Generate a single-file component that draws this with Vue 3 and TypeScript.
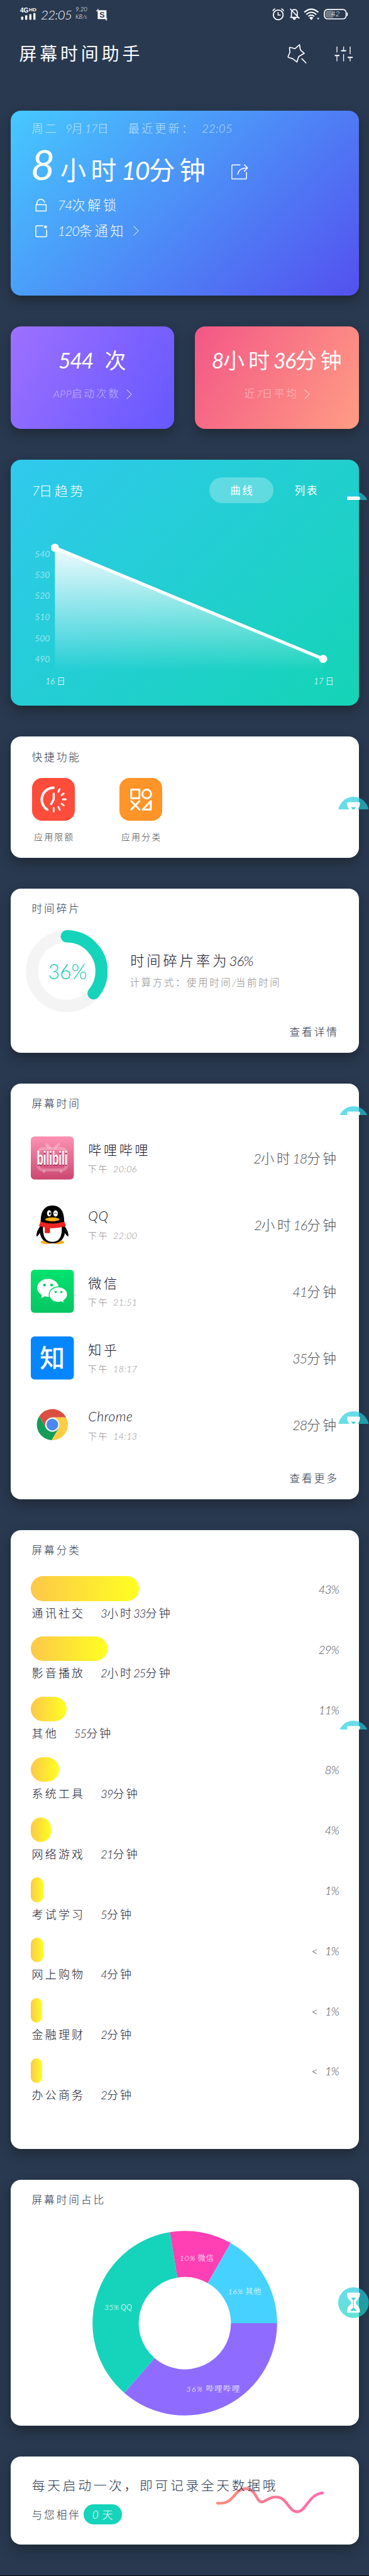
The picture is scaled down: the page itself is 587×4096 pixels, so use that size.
<script setup lang="ts">
import { h } from 'vue'

// Splits a string into Han and Latin runs so that each keeps its own spacing.
const runClass = (run: string): string => {
  if (run.charCodeAt(0) > 255) return 'han'
  return /[A-Za-z:]/.test(run) ? 'latin wide' : 'latin'
}
const Ink = (props: { t: string }) =>
  h(
    'span',
    { class: 'ink' },
    (props.t.match(/[\x00-\xff]+|[^\x00-\xff]+/g) ?? []).map((run) =>
      h('span', { class: runClass(run) }, run),
    ),
  )
Ink.props = ['t']

interface AppRow { id: string; name: string; at: string; time: string }
const apps: AppRow[] = [
  { id: 'bili', name: '哔哩哔哩', at: '下午 20:06', time: '2小时18分钟' },
  { id: 'qq', name: 'QQ', at: '下午 22:00', time: '2小时16分钟' },
  { id: 'wechat', name: '微信', at: '下午 21:51', time: '41分钟' },
  { id: 'zhihu', name: '知乎', at: '下午 18:17', time: '35分钟' },
  { id: 'chrome', name: 'Chrome', at: '下午 14:13', time: '28分钟' },
]

interface Category { name: string; time: string; pct: string; width: number }
const categories: Category[] = [
  { name: '通讯社交', time: '3小时33分钟', pct: '43%', width: 172.2 },
  { name: '影音播放', time: '2小时25分钟', pct: '29%', width: 122 },
  { name: '其他', time: '55分钟', pct: '11%', width: 56.5 },
  { name: '系统工具', time: '39分钟', pct: '8%', width: 45 },
  { name: '网络游戏', time: '21分钟', pct: '4%', width: 31.5 },
  { name: '考试学习', time: '5分钟', pct: '1%', width: 20 },
  { name: '网上购物', time: '4分钟', pct: '<  1%', width: 19.5 },
  { name: '金融理财', time: '2分钟', pct: '<  1%', width: 18 },
  { name: '办公商务', time: '2分钟', pct: '<  1%', width: 18 },
]

const ticks = [
  { v: 540, y: 80.6 }, { v: 530, y: 114.4 }, { v: 520, y: 147.4 },
  { v: 510, y: 180.9 }, { v: 500, y: 214.7 }, { v: 490, y: 247.5 },
]

const slice = (from: number, to: number): string => {
  const p = (r: number, deg: number) => {
    const a = (deg * Math.PI) / 180
    return `${(147 + r * Math.cos(a)).toFixed(2)} ${(147 + r * Math.sin(a)).toFixed(2)}`
  }
  return `M${p(146.8, from)}A146.8 146.8 0 0 1 ${p(146.8, to)}L${p(73.4, to)}A73.4 73.4 0 0 0 ${p(73.4, from)}Z`
}
const slices = [
  { d: slice(0, 131), fill: '#8f6cff', pct: '36%', name: '哔哩哔哩', x: 191.8, y: 251, w: 85 },
  { d: slice(131, 260.7), fill: '#16d4bb', pct: '35%', name: 'QQ', x: 41, y: 121, w: 44 },
  { d: slice(260.7, 299.8), fill: '#ff40b4', pct: '10%', name: '微信', x: 165.8, y: 42.8, w: 54 },
  { d: slice(299.8, 360), fill: '#46d2ff', pct: '16%', name: '其他', x: 242, y: 95.9, w: 53 },
]

// Floating hourglass button: vertical position and visible height.
const floats = [
  { top: 781.4, height: 14.1 },
  { top: 1267, height: 20.2 },
  { top: 1758.6, height: 14.2 },
  { top: 2244.2, height: 20.2 },
  { top: 2736, height: 14 },
  { top: 3637, height: 48.7 },
]
</script>

<template>
  <div class="page">
    <header class="status">
      <svg class="signal" width="27" height="23" viewBox="0 -3 27 23">
        <text x="0" y="8.3" font-size="11" textLength="13.5" lengthAdjust="spacingAndGlyphs">4G</text>
        <text x="14" y="5.8" font-size="7.6" textLength="12" lengthAdjust="spacingAndGlyphs">HD</text>
        <rect x="1.6" y="14.4" width="3.4" height="5" rx="1" />
        <rect x="8" y="12.2" width="3.4" height="7.2" rx="1" />
        <rect x="14.6" y="10.6" width="3.4" height="8.8" rx="1" />
        <rect x="21" y="8.8" width="3.4" height="10.6" rx="1" />
      </svg>
      <span class="clock">22:05</span>
      <span class="speed"><span>9.20</span><span>KB/s</span></span>
      <svg class="snap" width="18" height="19" viewBox="0 0 18 19">
        <path d="M2.4 2.3H16.4V16.3H2.4Z" fill="#fff" />
        <path d="M2.9 0V4M0 3.2H5M16 15V19M14 16H18" stroke="#fff" stroke-width="1.2" />
        <text x="9.3" y="13.6" text-anchor="middle" font-size="12.5" font-weight="700" fill="#293950">S</text>
      </svg>
      <svg class="right-icons" width="121" height="20" viewBox="0 0 121 20" fill="none" stroke="#fff">
        <circle cx="9.6" cy="10.6" r="7.8" stroke-width="1.8" />
        <path d="M9.4 6.2V11H13.4" stroke-width="1.6" />
        <path d="M1 4.6Q2 1.6 4.8 1M18.2 4.6Q17.2 1.6 14.4 1" stroke-width="1.7" />
        <path d="M28.6 14.6H41.6M30.6 14.4V7.4Q30.8 2.4 35.2 2.2Q39.8 2.4 40 7.4V14.4M28.6 1L43.4 16.4" stroke-width="1.7" />
        <path d="M32.4 15.2Q33 18.6 35.2 18.6Q37.4 18.6 38 15.2Z" fill="#fff" stroke="none" />
        <path d="M51 6.6Q62.2-3.4 73.4 6.6M54.2 10Q62.2 3 70.2 10" stroke-width="2" />
        <path d="M57.4 13Q62.2 9 67 13" stroke-width="1.8" />
        <path d="M59 15.2Q62.2 12.4 65.4 15.2L62.2 19Z" fill="#fff" stroke="none" />
        <path d="M71.4 15.6H75L73.2 18.6Z" fill="#fff" stroke="none" />
        <rect x="83" y="2.2" width="34.6" height="14.8" rx="5" stroke-width="1.7" />
        <path d="M88 4H97V15.2H88Q84.8 15.2 84.8 12V7.2Q84.8 4 88 4Z" fill="#727a86" stroke="none" />
        <path d="M119.4 7V12.4" stroke-width="1.6" />
        <text x="100.6" y="13.4" text-anchor="middle" font-size="12" font-style="italic" fill="#fff" stroke="none">42</text>
      </svg>
    </header>

    <div class="appbar">
      <h1 class="title"><Ink t="屏幕时间助手" /></h1>
      <svg class="star" width="31" height="31" viewBox="0 0 31 31">
        <path d="M19.5 1.2L12.6 7.1Q11.8 7.5 10.8 7L4.6 5.3Q3.6 5 3.5 6.2L4.2 13L1.4 19.8Q1 20.8 2 21.2L8.6 23.4L15.4 28.6L17.8 21Q18 20.2 18.8 19.6L27 14.8L21.4 9.8Q20.6 9 20.6 8Z" />
        <path d="M23.2 23.4L29.8 30" />
      </svg>
      <svg class="sliders" width="30" height="24" viewBox="0 0 30 24">
        <path d="M4 0V9.4M14.6 0V6.4M25 0V12M4 14.4V23.6M14.6 12V23.6M25 17V23.6" stroke-width="1.3" />
        <path d="M0.5 14.2H8M10.6 6.8H18.6M21 17.2H29" stroke-width="2" />
      </svg>
    </div>

    <main class="cards">
      <section class="card summary">
        <p class="line date">
          <Ink t="周二" /><Ink class="g1" t="9月17日" /><Ink class="g2" t="最近更新：" /><Ink class="g3" t="22:05" />
        </p>
        <p class="line total">
          <span class="lead">8</span><Ink t="小时10分钟" />
          <svg class="edit" width="27" height="25" viewBox="0 0 27 25">
            <path d="M14.6 1.2H2Q.8 1.2 .8 2.4V22.4Q.8 23.6 2 23.6H22.8Q24 23.6 24 22.4V12.6" />
            <path d="M10.2 16.6Q11.4 6 25.4 5.9M20.4.6L25.8 5.9L20.2 11.6" />
          </svg>
        </p>
        <p class="line fact">
          <svg width="19" height="21" viewBox="0 0 19 21"><path d="M1.3 9.6H17.4V19.6H1.3ZM2.6 9.4Q2.4 1 8.8 1Q13.6 1 15.2 6.4" /></svg>
          <Ink t="74次解锁" />
        </p>
        <p class="line fact notices">
          <svg width="19" height="21" viewBox="0 0 19 21">
            <path d="M13 2H2.6Q1 2 1 3.6V17.8Q1 19.4 2.6 19.4H16.6Q18.2 19.4 18.2 17.8V8" />
            <circle cx="16.4" cy="3.8" r="2.4" fill="#fff" stroke="none" />
          </svg>
          <Ink t="120条通知" />
          <svg class="chev" width="9" height="16" viewBox="0 0 9 16"><path d="M.6.6L8.2 8L.6 15.4" /></svg>
        </p>
      </section>

      <div class="tiles">
        <section class="card tile launches">
          <p class="num"><Ink t="544  次" /></p>
          <p class="cap"><Ink t="APP启动次数" /><svg class="chev" width="9" height="16" viewBox="0 0 9 16"><path d="M.6.6L8.2 8L.6 15.4" /></svg></p>
        </section>
        <section class="card tile average">
          <p class="num"><Ink t="8小时36分钟" /></p>
          <p class="cap"><Ink t="近7日平均" /><svg class="chev" width="9" height="16" viewBox="0 0 9 16"><path d="M.6.6L8.2 8L.6 15.4" /></svg></p>
        </section>
      </div>

      <section class="card trend">
        <div class="trend-head">
          <h2><Ink t="7日趋势" /></h2>
          <span class="tab on"><Ink t="曲线" /></span>
          <span class="tab"><Ink t="列表" /></span>
        </div>
        <svg class="chart" width="554" height="322" viewBox="0 0 554 322">
          <defs>
            <linearGradient id="fade" x1="0" y1="0" x2="0" y2="1">
              <stop offset="0" stop-color="#fff" stop-opacity=".92" />
              <stop offset="1" stop-color="#fff" stop-opacity="0" />
            </linearGradient>
          </defs>
          <path d="M70.4 70.9L497.1 247.7V266.7H70.4Z" fill="url(#fade)" />
          <path d="M70.4 70.9L497.1 247.7" stroke="#fff" stroke-width="5" />
          <circle cx="70.4" cy="70.9" r="6.5" fill="#fff" />
          <circle cx="497.1" cy="247.7" r="6.5" fill="#fff" />
          <text v-for="t in ticks" :key="t.v" class="tick" x="62.5" :y="t.y + 5">{{ t.v }}</text>
          <text class="day" x="71" y="288"><tspan class="n">16</tspan><tspan dx="3">日</tspan></text>
          <text class="day" x="498" y="288"><tspan class="n">17</tspan><tspan dx="3">日</tspan></text>
        </svg>
      </section>

      <section class="card quick">
        <h3><Ink t="快捷功能" /></h3>
        <div class="quick-row">
          <div class="quick-item">
            <svg class="red" width="68.4" height="68.4" viewBox="0 0 68.4 68.4">
              <path d="M34 15.4A19 19 0 0 0 24.2 50.4" stroke-width="4" />
              <path d="M34.4 25V34L30.4 41.6" stroke-width="3.4" />
              <path d="M44 17.4L41.8 22M50.3 24.6L47 27.4M49 34H53.6M47 40.9L50.3 43.8M41.8 46L44 50.6M34.4 48V53.4" stroke-width="2.8" />
            </svg>
            <Ink t="应用限额" />
          </div>
          <div class="quick-item">
            <svg class="orange" width="68.4" height="68.4" viewBox="0 0 68.4 68.4">
              <path d="M18.7 18.5H31.7V32.2H18.7ZM18.7 36.8L31.8 50.2M31.8 36.8L18.7 50.2M49.9 36.8V50.2H37Z" stroke-width="3" />
              <circle cx="43.4" cy="25.4" r="7" stroke-width="3" />
            </svg>
            <Ink t="应用分类" />
          </div>
        </div>
      </section>

      <section class="card pieces">
        <h3><Ink t="时间碎片" /></h3>
        <div class="pieces-row">
          <svg class="ring" width="130.4" height="130.4" viewBox="0 0 130.4 130.4">
            <circle cx="65.2" cy="65.2" r="55.4" stroke="#f4f4f4" />
            <circle cx="65.2" cy="65.2" r="55.4" stroke="#16d4bb" pathLength="100" stroke-dasharray="36 100" stroke-linecap="round" transform="rotate(-90 65.2 65.2)" />
            <text x="66.5" y="78.5" text-anchor="middle" textLength="62" lengthAdjust="spacingAndGlyphs">36%</text>
          </svg>
          <div>
            <p class="rate"><Ink t="时间碎片率为36%" /></p>
            <p class="how"><Ink t="计算方式：使用时间/当前时间" /></p>
          </div>
        </div>
        <p class="more"><Ink t="查看详情" /></p>
      </section>

      <section class="card usage">
        <h3><Ink t="屏幕时间" /></h3>
        <ul class="apps">
          <li v-for="a in apps" :key="a.id">
            <svg class="logo" viewBox="0 0 68.5 68.5">
              <g v-if="a.id === 'bili'">
                <defs>
                  <linearGradient id="pink" x1="0" y1="0" x2="0" y2="1"><stop offset="0" stop-color="#fd92b3" /><stop offset="1" stop-color="#cb4872" /></linearGradient>
                </defs>
                <rect width="68.5" height="68.5" rx="6" fill="url(#pink)" />
                <g fill="none" stroke="#fff" stroke-opacity=".25" stroke-width="4.6" stroke-linecap="round">
                  <rect x="12" y="19.4" width="44.8" height="34" rx="7" />
                  <path d="M24.6 12.6L30 18M44.2 12.6L38.8 18M21 55.6V56M48 55.6V56" />
                </g>
                <text class="wordmark" transform="translate(9.4 46.8) scale(1 1.7)" fill="#a8325c">bilibili</text>
                <text class="wordmark" transform="translate(9.4 45.4) scale(1 1.7)" fill="#fff">bilibili</text>
              </g>
              <g v-else-if="a.id === 'qq'">
                <ellipse cx="25" cy="62.2" rx="9.4" ry="3" fill="#fbb016" />
                <ellipse cx="43.8" cy="62.2" rx="9.4" ry="3" fill="#fbb016" />
                <path d="M15.4 36Q8.6 45 9 52.6Q10 54.6 15.6 46ZM53.4 36Q60.2 45 59.8 52.6Q58.8 54.6 53.2 46Z" />
                <path d="M34.4 3.8C46 3.8 52.8 12 53 27L54.6 44C54.4 57 46 64 34.4 64C22.8 64 14.4 57 14.2 44L15.8 27C16 12 22.8 3.8 34.4 3.8Z" />
                <path d="M19.6 36H49.2Q51 61.6 34.4 61.8Q17.8 61.6 19.6 36Z" fill="#fff" />
                <ellipse cx="29.2" cy="16.3" rx="3.4" ry="5" fill="#fff" /><ellipse cx="39.4" cy="16.5" rx="3.6" ry="5" fill="#fff" />
                <ellipse cx="30.3" cy="16.6" rx="1.4" ry="2.2" />
                <path d="M37.4 17Q39.6 14.4 41.4 16.8" fill="none" stroke="#000" stroke-width="1" />
                <ellipse cx="34.3" cy="25.9" rx="11.4" ry="3.1" fill="#fbb016" />
                <path d="M22.2 38H30.6V46.6Q30.6 47.8 29 47.8H23.6Q22.2 47.8 22.2 46.6Z" fill="#dd2320" />
                <path d="M15.6 29.6Q34.4 35.6 53.2 29.6L56 36.6Q34.4 43.2 13 36.6Z" fill="#ee2422" />
              </g>
              <g v-else-if="a.id === 'wechat'">
                <defs>
                  <linearGradient id="green" x1="0" y1="0" x2="0" y2="1"><stop offset="0" stop-color="#02e36f" /><stop offset="1" stop-color="#07c562" /></linearGradient>
                </defs>
                <rect width="68.5" height="68.5" rx="6" fill="url(#green)" />
                <path d="M27.3 14.6C36.8 14.6 44.5 20.9 44.5 29S36.8 43 27.3 43Q24.6 43 22 42.3L16.6 45L17.6 40Q10.1 36 10.1 29C10.1 20.9 17.8 14.6 27.3 14.6Z" fill="#fff" />
                <path d="M43.8 27.2C52 27.2 58.4 32.6 58.4 39.6Q58.4 45 52.4 49L53.2 53L48.4 50.8Q46 51.6 43.8 51.6C35.6 51.6 29.2 46.6 29.2 39.6S35.6 27.2 43.8 27.2Z" fill="#fff" stroke="#05d368" stroke-width="1.4" />
                <g fill="#05d368"><circle cx="21.7" cy="24.2" r="2.2" /><circle cx="33" cy="24.2" r="2.2" /><circle cx="39.7" cy="35.4" r="1.8" /><circle cx="48.7" cy="35.4" r="1.8" /></g>
              </g>
              <g v-else-if="a.id === 'zhihu'">
                <rect width="68.5" height="68.5" rx="6" fill="#0586ff" />
                <text class="zhi" x="34.2" y="49.4" text-anchor="middle">知</text>
              </g>
              <g v-else transform="translate(34.25 34.25)">
                <path d="M-20.8-13.3A24.7 24.7 0 0 1 21.9-11.4H0L-9.87 5.7Z" fill="#db4f41" />
                <path d="M21.9-11.4A24.7 24.7 0 0 1-1.08 24.67L9.87 5.7L0-11.4Z" fill="#ffcd42" />
                <path d="M-1.08 24.67A24.7 24.7 0 0 1-20.8-13.3L-9.87 5.7L9.87 5.7Z" fill="#159c59" />
                <circle r="11.4" fill="#f3f3f3" /><circle r="9.2" fill="#4b88f0" />
              </g>
            </svg>
            <div class="who">
              <span class="name"><Ink :t="a.name" /></span>
              <span class="at"><Ink :t="a.at" /></span>
            </div>
            <span class="dur"><Ink :t="a.time" /></span>
          </li>
        </ul>
        <p class="more"><Ink t="查看更多" /></p>
      </section>

      <section class="card kinds">
        <h3><Ink t="屏幕分类" /></h3>
        <ul>
          <li v-for="c in categories" :key="c.name">
            <div class="bar-row">
              <span class="bar" :style="{ width: c.width + 'px' }"></span>
              <span class="pct"><Ink :t="c.pct" /></span>
            </div>
            <p class="kind"><Ink :t="c.name" /><Ink :t="c.time" /></p>
          </li>
        </ul>
      </section>

      <section class="card share">
        <h3><Ink t="屏幕时间占比" /></h3>
        <svg class="donut" width="294" height="294" viewBox="0 0 294 294">
          <path v-for="s in slices" :key="s.name" :d="s.d" :fill="s.fill" />
          <text v-for="s in slices" :key="s.name + 't'" :x="s.x" :y="s.y + 5" text-anchor="middle" :textLength="s.w" lengthAdjust="spacing"><tspan class="n">{{ s.pct }}</tspan> {{ s.name }}</text>
        </svg>
      </section>

      <section class="card footer-card">
        <svg class="wave" width="174" height="48" viewBox="0 0 174 48">
          <defs>
            <linearGradient id="warm" x1="0" x2="1"><stop offset="0" stop-color="#ff8d7d" /><stop offset=".6" stop-color="#fc7497" /><stop offset="1" stop-color="#ff6cb2" /></linearGradient>
          </defs>
          <path d="M4 27.2C31 30 29 5 48.5 4C66 4 65 25.2 74.4 25.2C80 25.2 85 17.4 97 17.4C115 17.4 117 40.8 130.5 40.8C145 40.8 149 12.5 171 11" fill="none" stroke="url(#warm)" stroke-width="4.4" stroke-linecap="round" />
        </svg>
        <p class="note"><Ink t="每天启动一次，即可记录全天数据哦" /></p>
        <p class="days"><Ink t="与您相伴" /><span class="badge"><Ink t="0  天" /></span></p>
      </section>
    </main>

    <div v-for="f in floats" :key="f.top" class="float" :style="{ top: f.top + 'px', height: f.height + 'px' }">
      <svg width="48.7" height="48.7" viewBox="0 0 48.7 48.7">
        <defs>
          <linearGradient id="aqua" x1="0" y1="0" x2="0" y2="1"><stop offset="0" stop-color="#20cbe4" /><stop offset="1" stop-color="#1bd6bd" /></linearGradient>
        </defs>
        <circle cx="24.35" cy="24.35" r="24.35" fill="url(#aqua)" fill-opacity=".68" />
        <path d="M15.8 8.6H32.8Q34.8 8.6 34.6 10.8Q34.2 17 30.4 20.4Q27.8 22.4 27.8 24.4Q27.8 26.4 30.4 28.4Q34.2 31.8 34.6 38Q34.8 40.2 32.8 40.2H15.8Q13.8 40.2 14 38Q14.4 31.8 18.2 28.4Q20.8 26.4 20.8 24.4Q20.8 22.4 18.2 20.4Q14.4 17 14 10.8Q13.8 8.6 15.8 8.6Z" fill="#fff" />
        <path d="M20.2 16.4H28.4L24.3 21.2Z" fill="#3fd5d0" />
        <path d="M24.3 20.6V32" stroke="#3fd5d0" stroke-width="1" />
        <path d="M24.3 32L30 37.4H18.6Z" fill="#3fd5d0" />
      </svg>
    </div>
  </div>
</template>

<style>
body {
  background: #293950;
}
.ink {
  display: inline-block;
  padding-left: 0.088em;
  margin-right: -0.088em;
  white-space: pre;
}
.ink .han {
  letter-spacing: 0.176em;
}
.ink .latin {
  font-family: Lato, 'Liberation Sans', sans-serif;
  font-style: italic;
  letter-spacing: -0.045em;
}
.ink .latin.wide {
  letter-spacing: 0.03em;
}
</style>

<style scoped>
.page {
  position: relative;
  width: 587px;
  height: 4096px;
  overflow: hidden;
  box-sizing: border-box;
  border-bottom: 1px solid #05070a;
  background: #293950;
  color: #29374f;
  font-family: 'Noto Sans CJK SC', 'Liberation Sans', sans-serif;
  font-weight: 300;
}
h1, h2, h3, p, ul {
  margin: 0;
  padding: 0;
  font-weight: 300;
  list-style: none;
}
svg { display: block; flex: none; }

.status {
  display: flex;
  align-items: flex-start;
  height: 45px;
  padding: 12px 33px 0 32px;
  box-sizing: border-box;
  color: #fff;
  font-family: Lato, 'Liberation Sans', sans-serif;
}
.signal { margin-top: -3px; overflow: visible; fill: #fff; font-family: 'Liberation Sans', sans-serif; font-weight: 700; }
.clock { margin-left: 6px; font-size: 20.5px; line-height: 22px; font-style: italic; letter-spacing: -0.6px; width: 50px; }
.speed { display: flex; flex-direction: column; gap: 3px; width: 24px; margin-left: 5px; font-size: 9.5px; line-height: 9px; font-style: italic; margin-top: -2px; }
.snap { margin: 2px 0 0 9px; font-family: 'Liberation Sans', sans-serif; }
.right-icons { margin: 1px 0 0 auto; }

.appbar { display: flex; align-items: center; height: 80px; padding: 0 25px 0 28px; }
.title { flex: 1; color: #fff; font-size: 27.9px; font-weight: 400; line-height: 40px; margin-top: -3px; }
.star, .sliders { fill: none; stroke: #fff; stroke-width: 1.7; stroke-linejoin: round; stroke-linecap: round; }
.sliders { margin-left: 44px; stroke-linecap: butt; margin-top: 2px; }

.cards { display: flex; flex-direction: column; gap: 48.95px; padding: 51.2px 16.5px 0; }
.card { flex: none; box-sizing: border-box; border-radius: 16.3px; background: #fff; box-shadow: 0 8px 16px rgba(28, 38, 46, 0.75); }
h3 { padding-left: 32.5px; font-size: 16.7px; line-height: 24px; }

.summary { height: 293.5px; padding: 14px 32.5px 0; background: linear-gradient(135deg, #46c9ff, #5450ef); color: #fff; }
.line { display: flex; align-items: center; }
.date { height: 25px; font-size: 18.1px; color: rgba(255, 255, 255, 0.66); }
.g1 { margin-left: 11px; }
.g2 { margin-left: 28px; }
.g3 { margin-left: 11px; }
.total { height: 60px; margin-top: 16px; align-items: baseline; font-size: 41.3px; font-weight: 400; line-height: 60px; }
.lead { width: 43px; font: italic 400 66px/60px Lato, 'Liberation Sans', sans-serif; }
.edit { margin-left: 38px; fill: none; stroke: #fff; stroke-width: 1.5; }
.fact { height: 30px; margin-top: 19px; font-size: 21.1px; }
.fact svg { margin: 3px 15px 0 7px; fill: none; stroke: #fff; stroke-width: 1.5; }
.notices { margin-top: 11px; }
.fact .chev { margin: 1px 0 0 14px; stroke-width: 1; }
.chev { fill: none; stroke: #fff; stroke-width: 0.9; }

.tiles { display: flex; justify-content: space-between; height: 163px; }
.tile { width: 260.6px; height: 163px; padding-top: 28px; color: #fff; white-space: nowrap; }
.launches { background: linear-gradient(120deg, #9d70ff, #6658ff); }
.average { background: linear-gradient(120deg, #f35786, #ff9c84); }
.num { display: flex; justify-content: center; height: 50px; font-size: 34px; font-weight: 400; line-height: 50px; }
.launches .num { word-spacing: 3px; }
.cap { display: flex; justify-content: center; align-items: center; height: 24px; margin-top: 16px; font-size: 16.5px; color: rgba(255, 255, 255, 0.5); }
.cap .chev { margin: 4px 0 0 11px; }

.trend { height: 391.7px; background: linear-gradient(135deg, #30c9ee, #14d4b5); color: #fff; }
.trend-head { display: flex; align-items: center; height: 69.3px; padding: 28.4px 0 0 32.5px; box-sizing: border-box; }
.trend-head h2 { width: 283.8px; font-size: 21px; line-height: 30px; }
.tab { display: flex; align-items: center; justify-content: center; width: 102.6px; height: 40.9px; border-radius: 20.4px; font-size: 16.5px; font-weight: 400; }
.tab.on { background: rgba(255, 255, 255, 0.28); }
.chart { font-size: 13.5px; fill: #fff; }
.tick { text-anchor: end; font: italic 14px Lato, sans-serif; fill: rgba(255, 255, 255, 0.5); }
.day { text-anchor: middle; }
.n { font-family: Lato, sans-serif; font-style: italic; }

.quick { height: 193.2px; padding-top: 20px; }
.quick-row { display: flex; gap: 48.8px; padding: 21.4px 0 0 23.8px; }
.quick-item { display: flex; flex-direction: column; align-items: center; width: 90px; font-size: 13.7px; line-height: 20px; color: #444; gap: 14.6px; }
.quick-item svg { border-radius: 16px; fill: none; stroke: #fff; stroke-linecap: round; stroke-linejoin: round; }
.red { background: #ff4c3b; }
.orange { background: #ff9428; }

.pieces { height: 261.1px; padding-top: 19px; }
.pieces-row { display: flex; align-items: center; gap: 34px; padding: 22.4px 0 0 24.3px; }
.ring circle { fill: none; stroke-width: 19.5; }
.ring text { fill: #16c9b0; font: 300 34px Lato, sans-serif; }
.rate { font-size: 22.3px; line-height: 34px; color: #14142b; }
.how { font-size: 15.4px; line-height: 32px; color: #8e8e8e; }
.more { display: flex; justify-content: flex-end; padding-right: 33px; font-size: 16.7px; line-height: 24px; margin-top: 18.6px; }

.usage { height: 660.8px; padding-top: 19px; }
.apps { padding: 40.7px 33.5px 0 32.5px; }
.apps li { display: flex; align-items: center; height: 68.5px; margin-bottom: 37.6px; }
.logo { width: 68.5px; height: 68.5px; }
.wordmark { font: 700 17px 'Liberation Sans', sans-serif; }
.zhi { font-size: 40px; font-weight: 500; fill: #fff; }
.who { display: flex; flex-direction: column; flex: 1; padding-left: 21px; }
.name { font-size: 21px; line-height: 34px; color: #14142b; }
.at { font-size: 14.2px; line-height: 28px; color: #8e8e8e; word-spacing: 3px; }
.dur { font-size: 21.5px; line-height: 34px; color: #505050; }
.usage .more { margin-top: 1px; }

.kinds { height: 983.6px; padding-top: 19px; }
.kinds ul { padding: 30.3px 33px 0 32.5px; }
.kinds li { height: 95.8px; }
.bar-row { display: flex; justify-content: space-between; align-items: center; height: 39.2px; }
.bar { height: 39.2px; border-radius: 19.6px; background: linear-gradient(90deg, #fdc84a, #ffff20); }
.pct { font-size: 18.5px; color: #505050; word-spacing: 2px; }
.kind { display: flex; gap: 25px; font-size: 18px; line-height: 26px; padding-top: 5px; color: #14142b; }

.share { height: 391.7px; padding-top: 19px; }
.donut { margin: 38.6px 0 0 130.2px; font-size: 12.4px; fill: #fff; }
.donut text { white-space: pre; }

.footer-card { position: relative; height: 140.1px; padding: 28px 0 0 32.5px; }
.wave { position: absolute; left: 325.6px; top: 47.8px; }
.wave + .note { margin-top: 0; }
.wave path { transform: translateY(45.4px); }
.wave { overflow: visible; margin-top: -0.6px; }
.wave path { transform: none; }
.note { position: relative; font-size: 20.8px; line-height: 34px; white-space: nowrap; }
.days { display: flex; align-items: center; height: 32px; margin-top: 14px; font-size: 16.7px; }
.badge { display: flex; justify-content: center; align-items: center; width: 61.4px; height: 31.6px; margin-left: 5px; border-radius: 15.8px; background: #16d4bb; color: #fff; }

.float { position: absolute; right: 0; width: 48.7px; overflow: hidden; }
</style>
